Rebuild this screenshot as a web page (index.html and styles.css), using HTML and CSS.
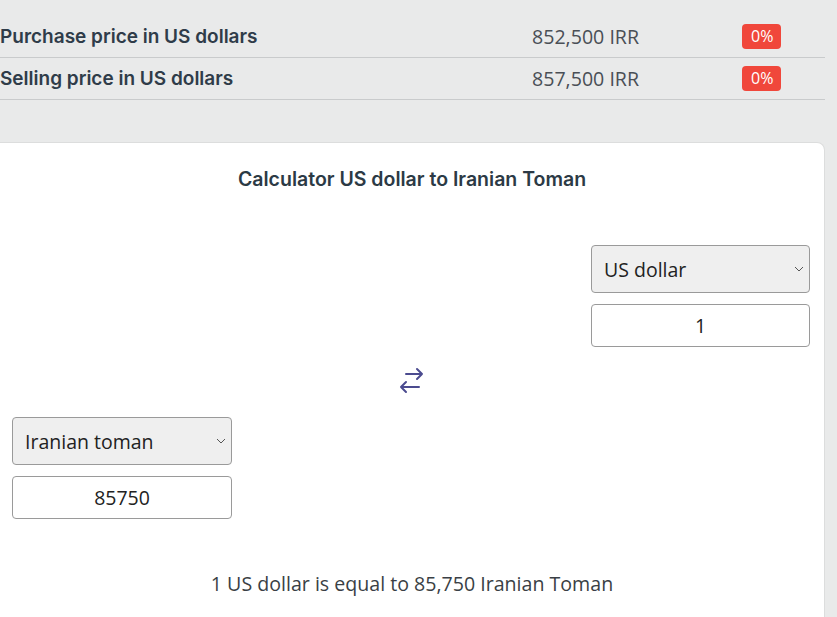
FILE: index.html
```html
<!DOCTYPE html>
<html lang="en">
<head>
  <meta charset="UTF-8">
  <meta name="viewport" content="width=device-width, initial-scale=1.0">
  <title>US dollar price</title>
  <link rel="stylesheet" href="styles.css">
</head>
<body>
  <div class="page">
    <div class="rates">
      <div class="rate-row">
        <div class="label">Purchase price in US dollars</div>
        <div class="value">852,500 IRR</div>
        <div><span class="badge">0%</span></div>
      </div>
      <div class="rate-row">
        <div class="label">Selling price in US dollars</div>
        <div class="value">857,500 IRR</div>
        <div><span class="badge">0%</span></div>
      </div>
    </div>

    <div class="card">
      <h2 class="card-title">Calculator US dollar to Iranian Toman</h2>

      <div class="converter">
        <div class="group group-from">
          <div class="select-wrap">
            <select class="currency">
              <option>US dollar</option>
            </select>
            <svg class="chevron" width="10" height="6" viewBox="0 0 10 6"><path d="M1 1l4 4 4-4" fill="none" stroke="#555" stroke-width="1"/></svg>
          </div>
          <input class="amount" type="text" value="1">
        </div>

        <div class="swap">
          <svg width="26" height="28" viewBox="0 0 26 28">
            <path d="M7 7h16M18 2l5 5-5 5" fill="none" stroke="#4b4b8f" stroke-width="2" stroke-linecap="round" stroke-linejoin="round"/>
            <path d="M20 20H2M7 15l-5 5 5 5" fill="none" stroke="#4b4b8f" stroke-width="2" stroke-linecap="round" stroke-linejoin="round"/>
          </svg>
        </div>

        <div class="group group-to">
          <div class="select-wrap">
            <select class="currency">
              <option>Iranian toman</option>
            </select>
            <svg class="chevron" width="10" height="6" viewBox="0 0 10 6"><path d="M1 1l4 4 4-4" fill="none" stroke="#555" stroke-width="1"/></svg>
          </div>
          <input class="amount" type="text" value="85750">
        </div>
      </div>

      <p class="result">1 US dollar is equal to 85,750 Iranian Toman</p>
    </div>
  </div>
</body>
</html>
```

FILE: styles.css
```css
body {
  margin: 0;
  background: #e9eaea;
  font-family: 'Inter', 'Open Sans', sans-serif;
  color: #2c3a47;
  overflow: hidden;
}

.page {
  width: 825px;
  padding-top: 16px;
}

.rate-row {
  display: grid;
  grid-template-columns: 532px 210px 1fr;
  align-items: center;
  height: 41px;
  border-bottom: 1px solid #c9cbcc;
}

.label {
  font-size: 19px;
  font-weight: 600;
  color: #2f3c49;
}

.value {
  font-family: 'Open Sans', sans-serif;
  font-size: 19.6px;
  color: #4a4f56;
}

.badge {
  display: inline-block;
  background: #f0473b;
  color: #fff;
  font-family: 'Open Sans', sans-serif;
  font-size: 16px;
  line-height: 25px;
  padding: 0 8px 0 9px;
  border-radius: 4px;
}

.card {
  margin-top: 42px;
  background: #fff;
  border: 1px solid #dcdddd;
  border-left: none;
  border-radius: 0 8px 0 0;
  height: 520px;
}

.card-title {
  margin: 0;
  padding-top: 24px;
  text-align: center;
  font-size: 19.5px;
  font-weight: 600;
  line-height: 24px;
  color: #2c3a45;
}

.converter {
  display: flex;
  flex-direction: column;
  padding: 54px 14px 0 12px;
}

.group {
  display: flex;
  flex-direction: column;
  gap: 11px;
  width: 219px;
}

.group-from {
  align-self: flex-end;
}

.group-to {
  align-self: flex-start;
  width: 220px;
  margin-top: 1px;
}

.select-wrap {
  position: relative;
}

.currency {
  appearance: none;
  width: 100%;
  height: 48px;
  box-sizing: border-box;
  padding: 0 12px;
  border: 1px solid #9a9a9a;
  border-radius: 4px;
  background: #efefef;
  font-family: 'Open Sans', sans-serif;
  font-size: 19.5px;
  color: #222;
}

.chevron {
  position: absolute;
  right: 6px;
  top: 21px;
}

.amount {
  width: 100%;
  height: 43px;
  box-sizing: border-box;
  border: 1px solid #9a9a9a;
  border-radius: 4px;
  background: #fff;
  text-align: center;
  font-family: 'Open Sans', sans-serif;
  font-size: 19.5px;
  color: #222;
}

.swap {
  display: flex;
  justify-content: center;
  padding: 20px 0 21px;
}

.swap svg {
  display: block;
  margin-left: 2px;
}

.result {
  margin: 51px 0 0;
  text-align: center;
  font-family: 'Open Sans', sans-serif;
  font-size: 19.6px;
  color: #3a3f45;
}
```
